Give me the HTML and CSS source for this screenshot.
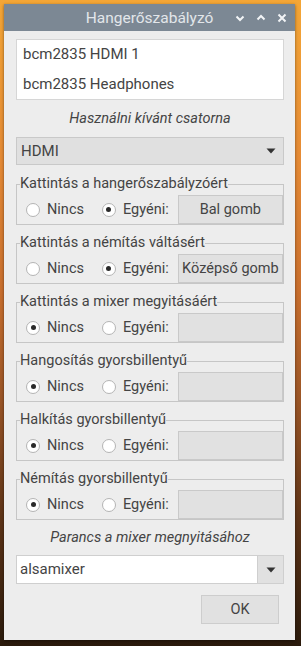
FILE: index.html
```html
<!DOCTYPE html>
<html lang="hu">
<head>
<meta charset="utf-8">
<title>Hangerőszabályzó</title>
<link rel="stylesheet" href="styles.css">
</head>
<body>
<div class="window">
  <div class="titlebar">
    <span class="title">Hangerőszabályzó</span>
    <div class="tb-icons">
      <svg class="tb-icon" viewBox="0 0 10 10" width="10" height="10"><path d="M1.5 3.5 L5 7 L8.5 3.5" fill="none" stroke="#f2f4f6" stroke-width="2"/></svg>
      <svg class="tb-icon" viewBox="0 0 10 10" width="10" height="10"><path d="M1.5 6.5 L5 3 L8.5 6.5" fill="none" stroke="#f2f4f6" stroke-width="2"/></svg>
      <svg class="tb-icon" viewBox="0 0 10 10" width="10" height="10"><path d="M1.5 1.5 L8.5 8.5 M8.5 1.5 L1.5 8.5" fill="none" stroke="#f2f4f6" stroke-width="2"/></svg>
    </div>
  </div>
  <div class="content">
    <div class="list">
      <div class="list-row">bcm2835 HDMI 1</div>
      <div class="list-row">bcm2835 Headphones</div>
    </div>
    <div class="caption">Használni kívánt csatorna</div>
    <div class="combo">
      <span>HDMI</span>
      <svg class="arrow" viewBox="0 0 10 6" width="10" height="6"><path d="M0.5 0.5 L9.5 0.5 L5 5.5 Z" fill="#333"/></svg>
    </div>

    <fieldset class="frame">
      <legend>Kattintás a hangerőszabályzóért</legend>
      <div class="row">
        <span class="radio"></span><span class="rlabel">Nincs</span>
        <span class="radio on"></span><span class="rlabel">Egyéni:</span>
        <div class="btn">Bal gomb</div>
      </div>
    </fieldset>

    <fieldset class="frame">
      <legend>Kattintás a némítás váltásért</legend>
      <div class="row">
        <span class="radio"></span><span class="rlabel">Nincs</span>
        <span class="radio on"></span><span class="rlabel">Egyéni:</span>
        <div class="btn">Középső gomb</div>
      </div>
    </fieldset>

    <fieldset class="frame">
      <legend>Kattintás a mixer megyitásáért</legend>
      <div class="row">
        <span class="radio on"></span><span class="rlabel">Nincs</span>
        <span class="radio"></span><span class="rlabel">Egyéni:</span>
        <div class="btn"></div>
      </div>
    </fieldset>

    <fieldset class="frame">
      <legend>Hangosítás gyorsbillentyű</legend>
      <div class="row">
        <span class="radio on"></span><span class="rlabel">Nincs</span>
        <span class="radio"></span><span class="rlabel">Egyéni:</span>
        <div class="btn"></div>
      </div>
    </fieldset>

    <fieldset class="frame">
      <legend>Halkítás gyorsbillentyű</legend>
      <div class="row">
        <span class="radio on"></span><span class="rlabel">Nincs</span>
        <span class="radio"></span><span class="rlabel">Egyéni:</span>
        <div class="btn"></div>
      </div>
    </fieldset>

    <fieldset class="frame">
      <legend>Némítás gyorsbillentyű</legend>
      <div class="row">
        <span class="radio on"></span><span class="rlabel">Nincs</span>
        <span class="radio"></span><span class="rlabel">Egyéni:</span>
        <div class="btn"></div>
      </div>
    </fieldset>

    <div class="caption caption2">Parancs a mixer megnyitásához</div>
    <div class="entry-combo">
      <div class="entry">alsamixer</div>
      <div class="entry-btn"><svg viewBox="0 0 10 6" width="10" height="6"><path d="M0.5 0.5 L9.5 0.5 L5 5.5 Z" fill="#333"/></svg></div>
    </div>
    <div class="actions">
      <div class="ok">OK</div>
    </div>
  </div>
</div>
</body>
</html>
```
FILE: styles.css
```css
html, body {
  margin: 0;
  padding: 0;
}
body {
  width: 301px;
  height: 646px;
  overflow: hidden;
  font-family: Roboto, "Noto Sans", sans-serif;
  font-size: 14.5px;
  color: #444;
  background: linear-gradient(180deg, #f4a636 0%, #e58a35 25%, #c96f2e 45%, #9a5526 62%, #5e3417 80%, #2a1a0c 100%);
}
.window {
  margin: 4px 0 0 4px;
  width: 291px;
  background: #ededed;
  box-shadow: 0 1px 3px rgba(0,0,0,0.45);
}
.titlebar {
  position: relative;
  height: 27px;
  background: #7c8894;
  display: flex;
  align-items: center;
  justify-content: center;
}
.title {
  color: #e2e6ea;
  font-size: 15.5px;
}
.tb-icons {
  position: absolute;
  right: 8px;
  top: 9px;
  display: flex;
  gap: 11px;
}
.tb-icon {
  display: block;
}
.content {
  padding: 8px 11px 16px 12px;
}
.list {
  height: 59px;
  background: #fff;
  border: 1px solid #d6d6d6;
  display: flex;
  flex-direction: column;
  justify-content: space-around;
  font-size: 15px;
}
.list-row {
  padding-left: 6px;
  line-height: 29px;
  height: 29px;
}
.caption {
  height: 37px;
  line-height: 37px;
  text-align: center;
  font-style: italic;
}
.caption2 {
  height: 35px;
  line-height: 36px;
}
.combo {
  height: 26px;
  border: 1px solid #c9c9c9;
  background: #e0e0e0;
  display: flex;
  align-items: center;
  justify-content: space-between;
  padding: 0 7px 0 4px;
  font-size: 15px;
}
.arrow {
  display: block;
}
.frame {
  margin: 10px 0 0 0;
  padding: 2px 0 0 0;
  border: 1px solid #c6c6c6;
  min-width: 0;
}
.frame + .frame {
  margin-top: 9px;
}
.frame legend {
  padding: 0;
  margin-left: 3px;
  line-height: 18px;
  height: 18px;
}
.row {
  display: flex;
  align-items: center;
  height: 29px;
}
.radio {
  box-sizing: border-box;
  width: 14px;
  height: 14px;
  border-radius: 50%;
  border: 1px solid #b4b4b4;
  background: #fff;
  display: flex;
  align-items: center;
  justify-content: center;
  margin-left: 9px;
  margin-right: 7px;
}
.radio + .rlabel + .radio {
  margin-left: 18px;
}
.radio.on::after {
  content: "";
  width: 5px;
  height: 5px;
  border-radius: 50%;
  background: #2a2a2a;
}
.btn {
  flex: 1;
  margin-left: 9px;
  height: 27px;
  border: 1px solid #c9c9c9;
  background: #e1e1e1;
  display: flex;
  align-items: center;
  justify-content: center;
  white-space: nowrap;
  overflow: hidden;
}
.entry-combo {
  display: flex;
  height: 29px;
  font-size: 15px;
}
.entry {
  flex: 1;
  box-sizing: border-box;
  border: 1px solid #cfcfcf;
  background: #fff;
  padding-left: 3px;
  line-height: 27px;
}
.entry-btn {
  box-sizing: border-box;
  width: 26px;
  border: 1px solid #cfcfcf;
  border-left: none;
  background: #e1e1e1;
  display: flex;
  align-items: center;
  justify-content: center;
}
.actions {
  display: flex;
  justify-content: flex-end;
  margin-top: 11px;
  padding-right: 5px;
}
.ok {
  box-sizing: border-box;
  width: 78px;
  height: 29px;
  border: 1px solid #cdcdcd;
  background: #e1e1e1;
  display: flex;
  align-items: center;
  justify-content: center;
}
```
